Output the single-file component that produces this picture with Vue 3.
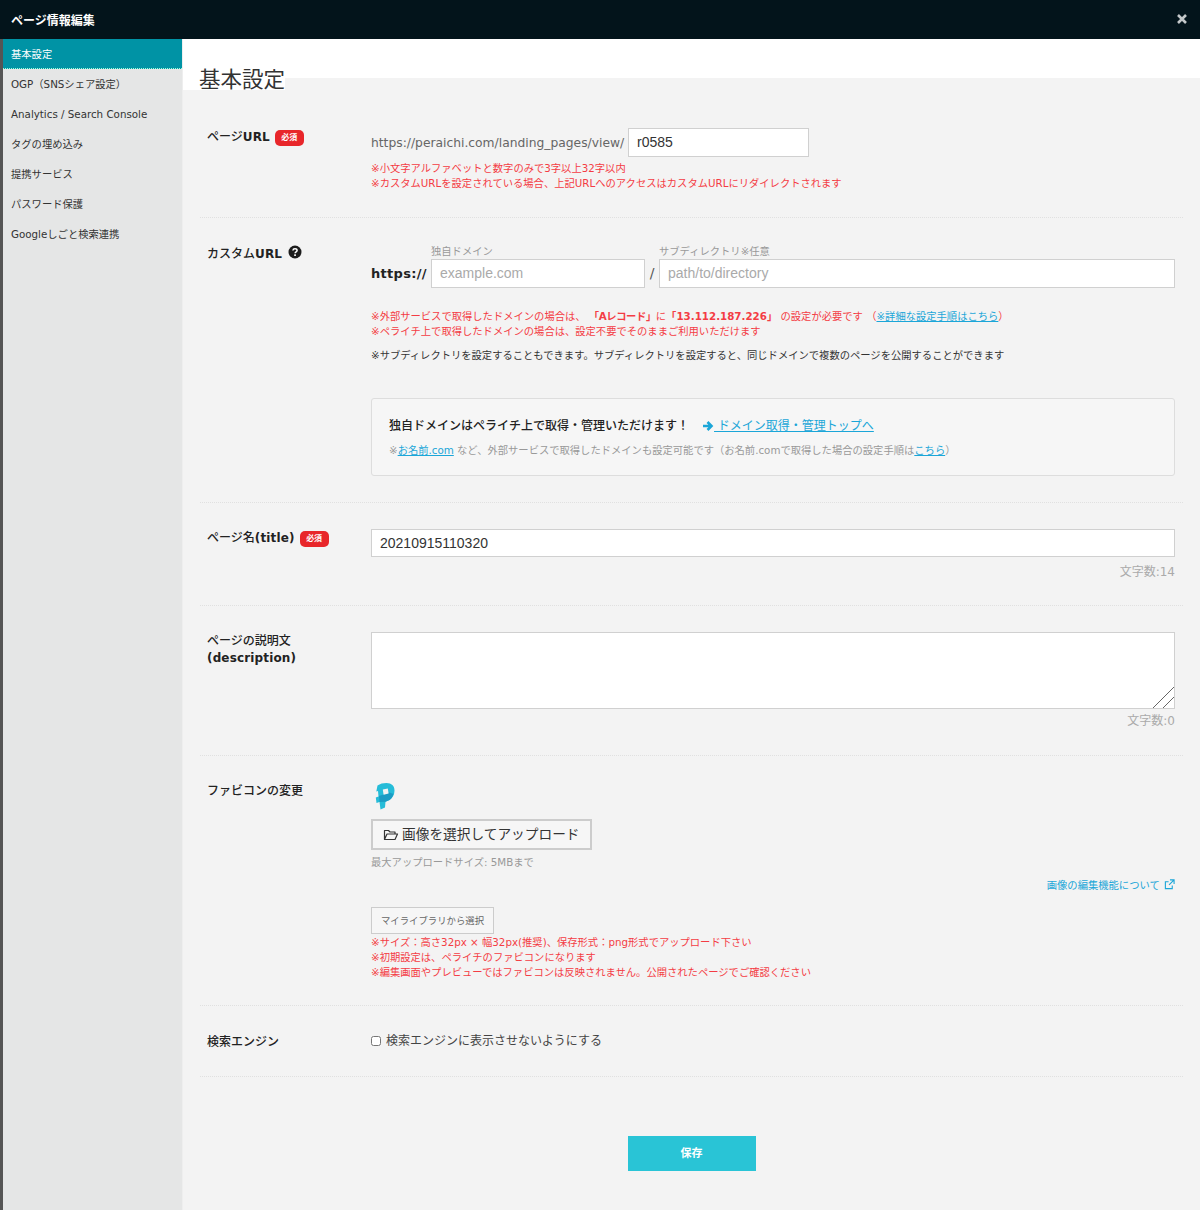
<script setup>
const menu = ['OGP（SNSシェア設定）', 'Analytics / Search Console', 'タグの埋め込み', '提携サービス', 'パスワード保護', 'Googleしごと検索連携']
</script>

<template>
  <div class="page">
    <header class="top">
      <span class="top-title">ページ情報編集</span>
      <svg class="close" viewBox="0 0 10 10" width="10" height="10" aria-label="閉じる"><path d="M1 1l8 8M9 1l-8 8" stroke="#c4c8ca" stroke-width="2.600" fill="none" /></svg>
    </header>
    <div class="body">
      <aside class="side">
        <div class="item active">基本設定</div>
        <div v-for="m in menu" :key="m" class="item">{{ m }}</div>
      </aside>
      <main class="main">
        <div class="band">
          <h1 class="title">基本設定</h1>
        </div>
        <div class="rows">
          <section class="row r1">
            <div class="label">ページ<b>URL</b><span class="req">必須</span></div>
            <div class="content">
              <div class="url-line">
                <span class="url-prefix">https://peraichi.com/landing_pages/view/</span>
                <input class="field url-input" value="r0585" />
              </div>
              <p class="note red n1">※小文字アルファベットと数字のみで3字以上32字以内<br />※カスタムURLを設定されている場合、上記URLへのアクセスはカスタムURLにリダイレクトされます</p>
            </div>
          </section>

          <section class="row r2">
            <div class="label">カスタム<b>URL</b>
              <svg class="help" viewBox="0 0 14 14" width="14" height="14"><circle cx="7" cy="7" r="6.500" fill="#1c1c1c" /><path d="M4.900 5.500c.1-1.200.9-1.800 2.100-1.800s2.100.7 2.100 1.700c0 1.400-2 1.400-2 2.800" fill="none" stroke="#fff" stroke-width="1.500" /><rect x="6.200" y="9.300" width="1.700" height="1.700" fill="#fff" /></svg>
            </div>
            <div class="content">
              <div class="domain">
                <span class="scheme">https://</span>
                <div class="dcol d1"><span class="mini">独自ドメイン</span><input class="field" placeholder="example.com" /></div>
                <span class="slash">/</span>
                <div class="dcol d2"><span class="mini">サブディレクトリ※任意</span><input class="field" placeholder="path/to/directory" /></div>
              </div>
              <p class="note red n2">※外部サービスで取得したドメインの場合は、 <b class="rec">「Aレコード」</b>に<b>「13.112.187.226」</b> の設定が必要です （<a href="#">※詳細な設定手順はこちら</a>）<br />※ペライチ上で取得したドメインの場合は、設定不要でそのままご利用いただけます</p>
              <p class="note dark n3">※サブディレクトリを設定することもできます。サブディレクトリを設定すると、同じドメインで複数のページを公開することができます</p>
              <div class="box">
                <div class="box-main">
                  <span class="box-strong">独自ドメインはペライチ上で取得・管理いただけます！</span>
                  <svg class="arrow" viewBox="0 0 12 12" width="12" height="12"><path d="M1 6h8M5.500 2 9.500 6 5.500 10" fill="none" stroke="#1ba6d8" stroke-width="2.600" /></svg>
                  <a href="#" class="box-link">&nbsp;ドメイン取得・管理トップへ</a>
                </div>
                <div class="box-sub">※<a href="#">お名前.com</a> など、外部サービスで取得したドメインも設定可能です（お名前.comで取得した場合の設定手順は<a href="#">こちら</a>）</div>
              </div>
            </div>
          </section>

          <section class="row r3">
            <div class="label">ページ名<b>(title)</b><span class="req">必須</span></div>
            <div class="content">
              <input class="field wide" value="20210915110320" />
              <div class="count">文字数:14</div>
            </div>
          </section>

          <section class="row r4">
            <div class="label">ページの説明文<br /><b>(description)</b></div>
            <div class="content">
              <div class="ta-wrap">
                <textarea class="ta"></textarea>
                <svg class="grip" viewBox="0 0 22 22" width="22" height="22"><path d="M1 22 22 1M11 22 22 11" stroke="#666" stroke-width="1" fill="none" /></svg>
              </div>
              <div class="count">文字数:0</div>
            </div>
          </section>

          <section class="row r5">
            <div class="label">ファビコンの変更</div>
            <div class="content">
              <svg class="logo" viewBox="0 0 20 27" width="20" height="27">
                <path fill="#25bcd8" d="M2.500 2.500C5 .8 8 0 11.500 0 16.500 0 19.500 2.800 19.500 7.500c0 4-1.800 7.500-5 9.500l-4 1.800L10 24.500 5.500 26.500 4.500 19 1.500 20 .8 14.500 3.500 13.500 3 8 1.300 8.500z" />
                <path fill="#1b9cc4" d="M4 13 14.500 9.500 18.500 11c-.8 2.600-2.200 4.700-4 6l-4 1.800-6 .2z" />
                <path fill="#f3f3f3" d="M7.800 6.500 12.800 5.500 13.600 10.500 8.600 11.800z" />
              </svg>
              <button class="upload">
                <svg viewBox="0 0 16 14" width="16" height="14"><path d="M1.500 11.500V2.500h4l1.500 1.500h5v2M1.500 11.500h10.500l2.500-5.500H4z" fill="none" stroke="#333" stroke-width="1.200" stroke-linejoin="round" /></svg>
                <span class="upload-text">画像を選択してアップロード</span>
              </button>
              <div class="max">最大アップロードサイズ: 5MBまで</div>
              <div class="edit-line"><a href="#" class="edit">画像の編集機能について
                <svg viewBox="0 0 12 12" width="11" height="11"><path d="M9 7v3.500H1.500V3H5M6.500 1H11v4.500M11 1 5.500 6.500" fill="none" stroke="#1ba6d8" stroke-width="1.200" /></svg></a></div>
              <button class="library">マイライブラリから選択</button>
              <p class="note red n4">※サイズ：高さ32px × 幅32px(推奨)、保存形式：png形式でアップロード下さい<br />※初期設定は、ペライチのファビコンになります<br />※編集画面やプレビューではファビコンは反映されません。公開されたページでご確認ください</p>
            </div>
          </section>

          <section class="row r6">
            <div class="label">検索エンジン</div>
            <div class="content">
              <label class="check"><input type="checkbox" />検索エンジンに表示させないようにする</label>
            </div>
          </section>
        </div>
        <div class="actions"><button class="save">保存</button></div>
      </main>
    </div>
  </div>
</template>

<style>
html, body { margin: 0; background: #f3f3f3; }
</style>

<style scoped>
* { box-sizing: border-box; }
.page {
  width: 1200px; height: 1210px; display: flex; flex-direction: column; overflow: hidden;
  font-family: "DejaVu Sans", "Noto Sans CJK JP", sans-serif; color: #222;
}
.top {
  height: 39px; flex: none; background: #03141b; color: #fff;
  display: flex; align-items: center; justify-content: space-between; padding: 0 13px 0 11px;
}
.top-title { font-size: 12px; font-weight: 700; }
.close { display: block; margin-top: -2px; }
.body { flex: 1; display: flex; min-height: 0; }
.side {
  width: 183px; flex: none; background: #e5e6e6; border-left: 3px solid #555; border-right: 1px solid #eee;
}
.item { height: 30px; line-height: 30px; padding-left: 8px; font-size: 10.300px; color: #333; white-space: nowrap; }
.active { background: #0093a5; color: #fff; border-bottom: 1px dotted #9fd; }
.main { flex: 1; background: #f3f3f3; min-width: 0; }
.band { height: 39px; background: #fff; }
.title {
  margin: 0; width: 102px; height: 51px; padding: 28px 0 0 16px; background: #fff;
  font-size: 21.500px; font-weight: 400; line-height: 25px; color: #333; white-space: nowrap;
}
.rows { margin: 0 17px; }
.row {
  display: grid; grid-template-columns: 164px 1fr; padding: 0 8px 0 7px; border-bottom: 1px dotted #e0e0e0;
}
.label { padding-top: 1px; font-size: 12px; font-weight: 500; line-height: 17px; color: #222; white-space: nowrap; }
.label b { font-weight: 700; letter-spacing: .15px; }
.req {
  display: inline-block; vertical-align: 1px; margin-left: 5px; width: 29px; height: 16px; line-height: 16px; border-radius: 5px;
  background: #e8262a; color: #fff; font-size: 8px; font-weight: 700; text-align: center;
}
.help { vertical-align: -1px; margin-left: 6px; }
.note { margin: 0; font-size: 10.300px; line-height: 15px; white-space: nowrap; }
.red { color: #f43c44; }
.dark { color: #333; }
.note a { color: #1ba6d8; }
.rec { letter-spacing: -.4px; }
.field {
  display: block; width: 100%; height: 29px; border: 1px solid #d0d0d0; background: #fff; padding: 0 8px 2px; outline: 0; border-radius: 0;
  font-family: "Liberation Sans", sans-serif; font-size: 14px; color: #333;
}
.field::placeholder { color: #aaa; opacity: 1; }

.r1 { height: 140px; padding-top: 50px; }
.url-line { display: flex; align-items: center; }
.url-prefix { font-size: 12.300px; color: #666; width: 257px; white-space: nowrap; }
.url-input { width: 181px; }
.n1 { margin-top: 4px; }

.r2 { height: 285px; padding-top: 26px; }
.domain { display: flex; align-items: flex-end; }
.scheme { width: 60px; font-size: 13px; font-weight: 700; line-height: 29px; white-space: nowrap; letter-spacing: .3px; }
.dcol { display: flex; flex-direction: column; }
.d1 { width: 214px; }
.d2 { flex: 1; }
.mini { font-size: 10.300px; line-height: 15px; color: #999; white-space: nowrap; }
.slash { width: 14px; text-align: center; font-size: 14px; line-height: 29px; color: #555; }
.n2 { margin-top: 21px; }
.n3 { margin-top: 9px; }
.box {
  margin-top: 35px; height: 78px; border: 1px solid #ddd; border-radius: 3px; background: #f6f6f6; padding: 18px 17px 0;
}
.box-main { display: flex; align-items: center; line-height: 18px; white-space: nowrap; }
.box-strong { font-size: 12px; font-weight: 500; color: #222; }
.arrow { margin-left: 13px; }
.box-link { font-size: 12px; color: #1ba6d8; }
.box-sub { margin-top: 8px; font-size: 10.300px; line-height: 15px; color: #999; white-space: nowrap; }
.box-sub a { color: #1ba6d8; }

.r3 { height: 103px; padding-top: 26px; }
.wide { height: 28px; padding-bottom: 0; }
.count { font-size: 12px; line-height: 15px; text-align: right; color: #aaa; }
.r3 .count { margin-top: 8px; }
.r4 .count { margin-top: 5px; }

.r4 { height: 150px; padding-top: 26px; }
.ta-wrap { position: relative; height: 77px; }
.ta { display: block; width: 100%; height: 100%; resize: none; border: 1px solid #d0d0d0; background: #fff; outline: 0; }
.grip { position: absolute; right: 1px; bottom: 1px; }

.r5 { height: 250px; padding-top: 26px; }
.logo { display: block; margin: 1px 0 0 4px; }
.upload {
  display: flex; align-items: center; gap: 3px; margin-top: 9px; width: 221px; height: 31px; padding: 0 0 0 10px;
  border: 2px solid #ccc; background: #f6f6f6; color: #333; font-family: inherit; font-size: 13.700px; white-space: nowrap;
}
.upload-text { margin-top: -4px; }
.max { margin-top: 5px; font-size: 10.300px; line-height: 15px; color: #999; white-space: nowrap; }
.edit-line { margin-top: 6px; text-align: right; line-height: 15px; }
.edit { font-size: 10.300px; color: #1ba6d8; text-decoration: none; white-space: nowrap; }
.edit svg { vertical-align: -1px; margin-left: 1px; }
.library {
  display: block; margin-top: 14px; width: 123px; height: 27px; padding: 0 0 2px;
  border: 1px solid #ccc; background: #f6f6f6; color: #666; font-family: inherit; font-size: 9.400px; white-space: nowrap;
}
.n4 { margin-top: 1px; }

.r6 { height: 71px; padding-top: 27px; }
.check { display: flex; align-items: center; font-size: 12px; line-height: 17px; color: #444; white-space: nowrap; }
.check input { width: 10px; height: 10px; margin: -2px 5px 0 0; }

.actions { display: flex; justify-content: center; padding-top: 59px; }
.save {
  width: 128px; height: 35px; border: 0; padding: 0 0 3px; background: #29c4d6; color: #fff; font-family: inherit; font-size: 11px; font-weight: 700;
}
</style>
